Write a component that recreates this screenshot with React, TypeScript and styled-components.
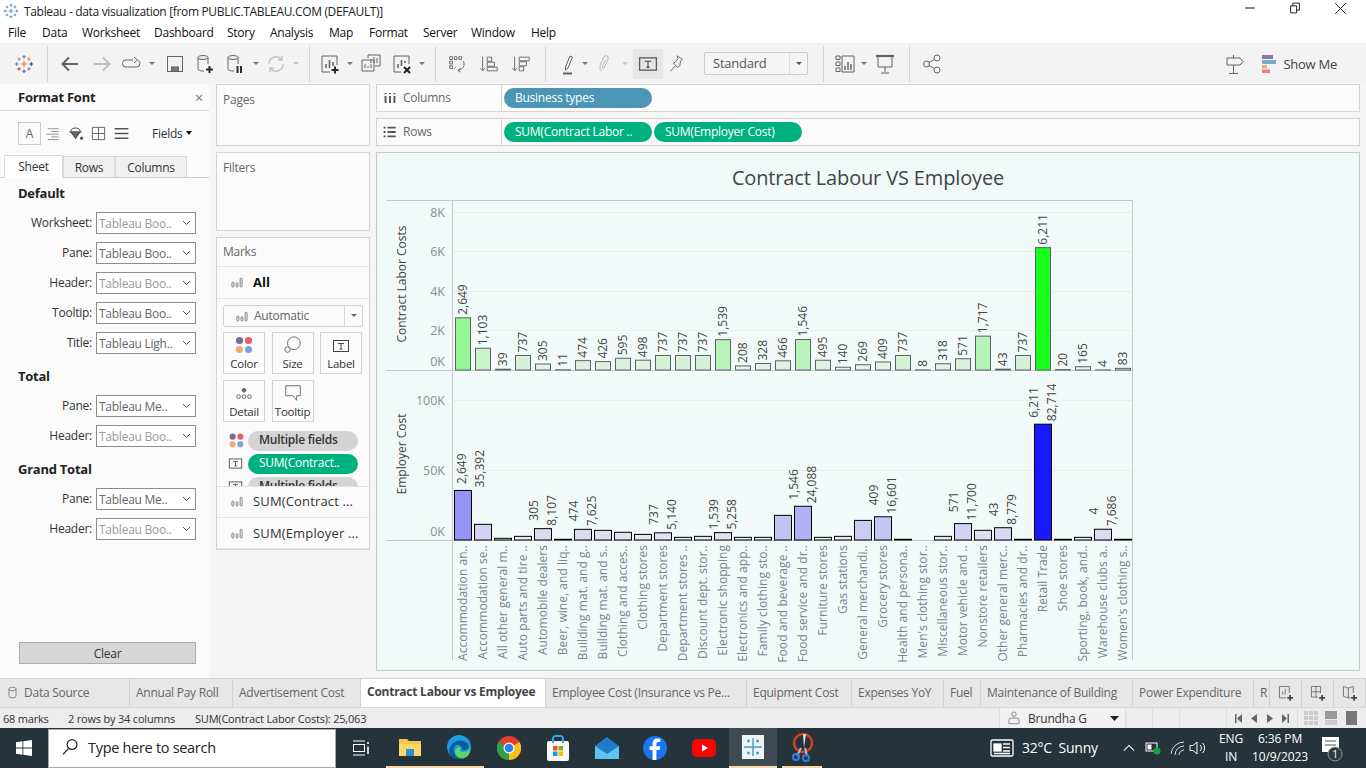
import React from "react";
import styled, { createGlobalStyle } from "styled-components";

const Global = createGlobalStyle`
  html, body { margin: 0; padding: 0; overflow: hidden; background: #f5f5f5; }
  * { box-sizing: border-box; }
`;
const UI = `"Open Sans", "Noto Sans", sans-serif`;

const Page = styled.div`
  width: 1366px; height: 768px; display: flex; flex-direction: column; overflow: hidden;
  font-family: ${UI}; font-size: 12px; color: #333; letter-spacing: -0.25px;
`;
const TitleBar = styled.div`
  height: 22px; background: #fff; display: flex; align-items: center; padding-left: 3px; gap: 5px;
  color: #222; position: relative; letter-spacing: -0.33px;
`;
const WinCtl = styled.div<{ $x: number }>`
  position: absolute; top: 2px; left: ${p => p.$x}px;
`;
const MenuBar = styled.div`
  height: 21px; background: #fff; display: flex; align-items: center; padding-left: 8px; color: #111;
`;
const MenuItem = styled.span<{ $w: number }>`
  width: ${p => p.$w}px; flex: none;
`;
const Toolbar = styled.div`
  height: 41px; background: #f3f3f3; display: flex; align-items: center;
`;
const Tool = styled.div<{ $w: number; $on?: boolean }>`
  width: ${p => p.$w}px; height: 30px; flex: none; display: flex; align-items: center; justify-content: center;
  background: ${p => (p.$on ? "#e6e6e6" : "transparent")};
`;
const Sep = styled.div`
  width: 1px; height: 36px; background: #d4d4d4; flex: none;
`;
const Gap = styled.div<{ $w: number }>`
  width: ${p => p.$w}px; flex: none;
`;
const Grow = styled.div`flex: 1;`;
const StdBox = styled.div`
  width: 104px; height: 23px; flex: none; border: 1px solid #ccc; border-radius: 2px; background: #f5f5f5; margin-bottom: 1px;
  display: flex; align-items: center; padding: 0 0 1px 8px; color: #555; font-size: 13px; position: relative;
`;
const StdArrow = styled.div`
  position: absolute; right: 0; top: 0; bottom: 0; width: 18px; border-left: 1px solid #ddd;
  display: flex; align-items: center; justify-content: center;
`;
const Caret = styled.div<{ $c?: string; $s?: number }>`
  width: 0; height: 0; border-left: ${p => p.$s || 3}px solid transparent; border-right: ${p => p.$s || 3}px solid transparent;
  border-top: ${p => (p.$s || 3) + 0.5}px solid ${p => p.$c || "#777"};
`;
const ShowMe = styled.div`
  display: flex; align-items: center; gap: 7px; margin-left: 13px; margin-right: 29px; color: #444; font-size: 13px;
`;

const Main = styled.div`
  height: 594px; display: flex; background: #f5f5f5;
`;
const LeftPanel = styled.div`
  width: 209px; background: #fbfbfb; flex: none; display: flex; flex-direction: column; position: relative;
`;
const PanelHead = styled.div`
  height: 27px; border-bottom: 1px solid #d8d8d8; display: flex; align-items: center; justify-content: space-between;
  padding: 0 6px 0 18px; font-weight: 700; font-size: 13px; color: #222;
`;
const Close = styled.span`
  font-weight: 400; font-size: 15px; color: #777;
`;
const IconRow = styled.div`
  height: 44px; display: flex; align-items: center; padding-left: 18px; color: #333;
`;
const ABox = styled.div`
  width: 23px; height: 23px; border: 1px solid #ccc; display: flex; align-items: center; justify-content: center;
  color: #666; font-size: 12px;
`;
const FmtIcon = styled.div`
  width: 23px; display: flex; justify-content: center;
`;
const Fields = styled.div`
  margin-left: 19px; display: flex; align-items: center; gap: 3px; color: #333;
`;
const Tabs = styled.div`
  height: 23px; display: flex; align-items: flex-end; padding-left: 4px; border-bottom: 1px solid #ccc;
`;
const FTab = styled.div<{ $w: number; $on?: boolean }>`
  width: ${p => p.$w}px; height: ${p => (p.$on ? 23 : 21)}px; flex: none; display: flex; align-items: center; justify-content: center;
  background: ${p => (p.$on ? "#fff" : "#f0f0f0")};
  border: 1px solid #d9d9d9; border-bottom: ${p => (p.$on ? "1px solid #fff" : "none")};
  margin-bottom: ${p => (p.$on ? -1 : 0)}px; color: #333;
`;
const Section = styled.div<{ $mt: number }>`
  margin-top: ${p => p.$mt}px; padding-left: 18px; font-weight: 700; font-size: 13px; color: #222; height: 18px; line-height: 18px;
`;
const FontRows = styled.div`
  display: flex; flex-direction: column; gap: 8px; margin-top: 10px;
`;
const FontRow = styled.div`
  display: flex; align-items: center; height: 22px;
`;
const FontLabel = styled.div`
  width: 92px; text-align: right; color: #333; flex: none; padding-bottom: 2px;
`;
const FontSelect = styled.div<{ $off?: boolean }>`
  margin-left: 4px; width: 100px; height: 22px; border: 1px solid #8d8d8d; background: #fff;
  display: flex; align-items: center; padding-left: 2px; justify-content: space-between; padding-right: 4px;
  color: ${p => (p.$off ? "#9a9a9a" : "#666")}; white-space: nowrap;
`;
const ClearBtn = styled.div`
  position: absolute; left: 19px; top: 558px; width: 177px; height: 22px; background: #d6d6d6; border: 1px solid #adadad;
  display: flex; align-items: center; justify-content: center; color: #333;
`;

const MidCol = styled.div`
  width: 154px; margin-left: 7px; flex: none; display: flex; flex-direction: column; gap: 6px;
`;
const Card = styled.div<{ $h: number }>`
  height: ${p => p.$h}px; background: #fbfbfb; border: 1px solid #d4d4d4; padding: 6px 6px; color: #666;
`;
const Marks = styled.div`
  height: 313px; background: #fbfbfb; border: 1px solid #d4d4d4; display: flex; flex-direction: column;
`;
const MarksHead = styled.div`
  height: 29px; padding: 5px 6px; color: #666; border-bottom: 1px solid #e2e2e2;
`;
const MarkRow = styled.div<{ $b?: boolean; $h: number }>`
  height: ${p => p.$h}px; display: flex; align-items: center; gap: 9px; padding: 0 0 1px 13px; border-bottom: 1px solid #e2e2e2;
  font-size: 13px; font-weight: ${p => (p.$b ? 700 : 400)}; color: ${p => (p.$b ? "#111" : "#333")}; letter-spacing: ${p => (p.$b ? 0 : 0.15)}px; white-space: nowrap;
`;
const MarkBody = styled.div`
  height: 188px; padding: 6px 6px 0; border-bottom: 1px solid #e2e2e2; overflow: hidden; position: relative; flex: none;
`;
const Auto = styled.div`
  height: 22px; border: 1px solid #d0d0d0; border-radius: 2px; display: flex; align-items: center; padding-left: 11px; gap: 5px;
  color: #666; position: relative; background: #fbfbfb;
`;
const AutoArrow = styled.div`
  position: absolute; right: 0; top: 0; bottom: 0; width: 18px; border-left: 1px solid #d8d8d8;
  display: flex; align-items: center; justify-content: center;
`;
const MarkGrid = styled.div`
  display: grid; grid-template-columns: 42px 42px 42px; column-gap: 6.5px; row-gap: 6px; margin-top: 5px;
`;
const MarkBtn = styled.div`
  height: 42px; border: 1px solid #d4d4d4; display: flex; flex-direction: column; align-items: center; justify-content: flex-end;
  padding-bottom: 2px; gap: 1px; color: #333; font-size: 11.5px;
`;
const PillRow = styled.div<{ $mt?: number }>`
  display: flex; align-items: center; height: 20px; margin-top: ${p => p.$mt ?? 3}px;
`;
const PillIcon = styled.div`
  width: 25px; display: flex; justify-content: flex-start; padding-left: 5px; flex: none;
`;
const Pill = styled.div<{ $c: string; $fg: string; $w: number; $semi?: boolean }>`
  width: ${p => p.$w}px; height: 20px; border-radius: 10px; background: ${p => p.$c}; color: ${p => p.$fg};
  display: flex; align-items: center; padding: 0 0 2px 11px; white-space: nowrap; flex: none; overflow: hidden;
  font-weight: ${p => (p.$semi ? 600 : 400)};
`;
const Scroll = styled.div`
  position: absolute; left: 132px; top: 222px; width: 13px; height: 24px; background: #ddd; border: 1px solid #c8c8c8;
  display: flex; flex-direction: column; align-items: center; justify-content: space-around;
`;

const RightCol = styled.div`
  width: 984px; margin-left: 6px; flex: none; display: flex; flex-direction: column; gap: 6px;
`;
const Shelf = styled.div`
  height: 28px; background: #fbfbfb; border: 1px solid #d4d4d4; display: flex; align-items: center;
`;
const ShelfLabel = styled.div`
  width: 125px; height: 100%; flex: none; border-right: 1px solid #d4d4d4; display: flex; align-items: center; gap: 6px;
  padding: 0 0 1px 6px; color: #666; margin-right: 2px;
`;
const ShelfPills = styled.div`
  display: flex; gap: 2px; color: #fff;
`;
const View = styled.div`
  height: 519px; background: #f2faf9; border: 1px solid #c6cccc; display: flex; flex-direction: column;
`;
const ChartTitle = styled.div`
  height: 42px; padding-top: 11px; width: 982px; text-align: center; font-size: 20px; line-height: 27px; font-weight: 500; color: #444;
  letter-spacing: -0.15px; flex: none;
`;
const ChartSvg = styled.svg`
  display: block; margin-left: 9px; flex: none;
`;

const TabBar = styled.div`
  height: 29px; background: #e7e7e7; border-top: 1px solid #d2d2d2; display: flex; align-items: stretch;
`;
const STab = styled.div<{ $w: number; $on?: boolean }>`
  width: ${p => p.$w}px; flex: none; display: flex; align-items: center; padding: 0 0 ${p => (p.$on ? 3 : 2)}px 6px; gap: 5px;
  border-right: 1px solid #d2d2d2; overflow: hidden; white-space: nowrap;
  background: ${p => (p.$on ? "#fff" : "transparent")}; color: ${p => (p.$on ? "#444" : "#666")}; font-weight: ${p => (p.$on ? 700 : 400)};
`;
const TabIcon = styled.div<{ $w: number }>`
  width: ${p => p.$w}px; flex: none; display: flex; align-items: center; justify-content: center; border-right: 1px solid #d2d2d2;
`;
const Status = styled.div`
  height: 21px; background: #ececec; border-top: 1px solid #d8d8d8; display: flex; align-items: center; color: #333; font-size: 11px; letter-spacing: -0.2px;
`;
const StatText = styled.span<{ $w: number }>`
  width: ${p => p.$w}px; flex: none; white-space: nowrap;
`;
const UserBox = styled.div`
  width: 127px; height: 100%; flex: none; display: flex; align-items: center; gap: 7px; padding-left: 7px; background: #f1f1f1;
  border-left: 1px solid #dcdcdc; border-right: 1px solid #dcdcdc; position: relative; color: #333; font-size: 12px;
`;
const StatCell = styled.div<{ $w: number }>`
  width: ${p => p.$w}px; height: 100%; flex: none; border-right: 1px solid #dcdcdc; display: flex; align-items: center; justify-content: space-around; padding: 0 3px;
`;
const Task = styled.div`
  height: 40px; background: #25333b; display: flex; align-items: center; color: #fff; position: relative;
`;
const StartBtn = styled.div`
  width: 48px; height: 40px; display: flex; align-items: center; justify-content: center; flex: none;
`;
const Search = styled.div`
  width: 288px; height: 39px; margin-top: 1px; background: #fff; border: 1px solid #aaa; display: flex; align-items: center; gap: 9px; padding: 0 0 3px 12px;
  color: #222; font-size: 14.5px; flex: none; letter-spacing: -0.3px;
`;
const TaskSlot = styled.div<{ $w: number; $on?: boolean; $open?: boolean }>`
  width: ${p => p.$w}px; height: 40px; flex: none; display: flex; align-items: center; justify-content: center; position: relative;
  background: ${p => (p.$on ? "#3e4b53" : "transparent")};
  border-bottom: ${p => (p.$open ? "2px solid #f6d7b0" : "none")};
`;
const Tray = styled.div<{ $w: number }>`
  width: ${p => p.$w}px; flex: none; display: flex; flex-direction: column; align-items: center; line-height: 18px; font-size: 12px; color: #fff; letter-spacing: -0.1px;
`;
const Weather = styled.div`
  display: flex; align-items: center; gap: 8px; font-size: 14px; width: 114px; flex: none; white-space: pre; padding: 0 0 1px 1px;
`;

const Ico: React.FC<{ s?: number; c?: string; w?: number; children: React.ReactNode }> = ({ s = 22, c = "#636363", w = 1, children }) => (
  <svg width={s} height={s} viewBox="0 0 22 22" fill="none" stroke={c} strokeWidth={w} style={{ display: "block", flex: "none" }}>
    {children}
  </svg>
);

const Plus: React.FC<{ x: number; y: number; c?: string; r?: number }> = ({ x, y, c = "#2b2b2b", r = 3.5 }) => (
  <path d={`M${x - r} ${y}H${x + r}M${x} ${y - r}V${y + r}`} stroke={c} strokeWidth={2} />
);

const TabLogo: React.FC<{ s?: number; mono?: boolean }> = ({ s = 22, mono }) => {
  const col = (c: string) => (mono ? "#5d8fb4" : c);
  const pts: [number, number, number, string][] = [
    [11, 11, 3.4, col("#e8762d")], [11, 3, 2, col("#5b879b")], [11, 19, 2, col("#5b6591")], [3, 11, 2, col("#59879b")], [19, 11, 2, col("#1f447e")],
    [5.5, 5.5, 1.7, col("#7099a6")], [16.5, 5.5, 1.7, col("#e8762d")], [5.5, 16.5, 1.7, col("#c72037")], [16.5, 16.5, 1.7, col("#59879b")],
  ];
  return (
    <svg width={s} height={s} viewBox="0 0 22 22" style={{ display: "block", flex: "none" }}>
      {pts.map(([x, y, r, c], i) => (
        <path key={i} d={`M${x - r} ${y}H${x + r}M${x} ${y - r}V${y + r}`} stroke={c} strokeWidth={1.3} fill="none" />
      ))}
    </svg>
  );
};

const BarsGlyph: React.FC = () => (
  <Ico s={14} c="#777" w={1.4}>
    <rect x="3" y="11" width="3" height="8" rx="1.5" />
    <rect x="9.5" y="12" width="3" height="7" rx="1.5" />
    <rect x="16" y="5" width="3" height="14" rx="1.5" />
  </Ico>
);
const Dots: React.FC<{ s?: number }> = ({ s = 20 }) => (
  <svg width={s} height={s} viewBox="0 0 20 20" style={{ display: "block" }}>
    <circle cx="5.5" cy="5.5" r="3.6" fill="#7b6a95" />
    <circle cx="14.5" cy="5.5" r="3.6" fill="#e4606d" />
    <circle cx="5.5" cy="14.5" r="3.6" fill="#f0a878" />
    <circle cx="14.5" cy="14.5" r="3.6" fill="#7fa3d1" />
  </svg>
);
const TBox: React.FC<{ s?: number }> = ({ s = 18 }) => (
  <svg width={s} height={s} viewBox="0 0 18 18" fill="none" stroke="#444" style={{ display: "block" }}>
    <rect x="1.5" y="3.5" width="15" height="11" />
    <path d="M6 6.5H12M9 6.5V12M7.6 12H10.4" />
  </svg>
);

type Row = { n: string; a: number; b: number; lab?: boolean };
const data: Row[] = [
  { n: "Accommodation an..", a: 2649, b: 35392, lab: true },
  { n: "Accommodation se..", a: 1103, b: 11200 },
  { n: "All other general m..", a: 39, b: 1200 },
  { n: "Auto parts and tire ..", a: 737, b: 2600 },
  { n: "Automobile dealers", a: 305, b: 8107, lab: true },
  { n: "Beer, wine, and liq..", a: 11, b: 500 },
  { n: "Building mat. and g..", a: 474, b: 7625, lab: true },
  { n: "Building mat. and s..", a: 426, b: 6900 },
  { n: "Clothing and acces..", a: 595, b: 5500 },
  { n: "Clothing stores", a: 498, b: 4000 },
  { n: "Department stores", a: 737, b: 5140, lab: true },
  { n: "Department stores ..", a: 737, b: 1900 },
  { n: "Discount dept. stor..", a: 737, b: 2600 },
  { n: "Electronic shopping", a: 1539, b: 5258, lab: true },
  { n: "Electronics and app..", a: 208, b: 1900 },
  { n: "Family clothing sto..", a: 328, b: 1900 },
  { n: "Food and beverage ..", a: 466, b: 17600 },
  { n: "Food service and dr..", a: 1546, b: 24088, lab: true },
  { n: "Furniture stores", a: 495, b: 1900 },
  { n: "Gas stations", a: 140, b: 2600 },
  { n: "General merchandi..", a: 269, b: 14000 },
  { n: "Grocery stores", a: 409, b: 16601, lab: true },
  { n: "Health and persona..", a: 737, b: 500 },
  { n: "Men's clothing stor..", a: 8, b: 0 },
  { n: "Miscellaneous stor..", a: 318, b: 2600 },
  { n: "Motor vehicle and ..", a: 571, b: 11700, lab: true },
  { n: "Nonstore retailers", a: 1717, b: 6900 },
  { n: "Other general merc..", a: 43, b: 8779, lab: true },
  { n: "Pharmacies and dr..", a: 737, b: 500 },
  { n: "Retail Trade", a: 6211, b: 82714, lab: true },
  { n: "Shoe stores", a: 20, b: 500 },
  { n: "Sporting, book, and..", a: 165, b: 1900 },
  { n: "Warehouse clubs a..", a: 4, b: 7686, lab: true },
  { n: "Women's clothing s..", a: 83, b: 500 },
];

const fmt = (v: number) => v.toLocaleString("en-US");
const mix = (t: number, to: [number, number, number]) => {
  const from = [240, 240, 240];
  return `rgb(${from.map((f, i) => Math.round(f + (to[i] - f) * t)).join(",")})`;
};
const CF = `"Open Sans", sans-serif`;

const Chart: React.FC = () => {
  const labelAt = (x: number, y: number, txt: string, anchor: "start" | "middle" | "end", fill: string, ls = 0) => (
    <text transform={`rotate(-90 ${x} ${y})`} x={x} y={y} textAnchor={anchor} fill={fill} fontFamily={CF} fontSize={12} letterSpacing={ls}>{txt}</text>
  );
  return (
    <ChartSvg width={760} height={470} viewBox="386 195 760 470">
      {[212.5, 251.5, 291.5, 330.5, 400.5, 470.5].map(y => (
        <line key={y} x1={453} x2={1132} y1={y} y2={y} stroke="#ececec" />
      ))}
      <path d="M386 200.5H1132.5V660M386 370.5H1132M386 540.5H1132M452.5 200V660" stroke="#c4c8ca" fill="none" />
      {[["8K", 217], ["6K", 256], ["4K", 296], ["2K", 335], ["0K", 366], ["100K", 405], ["50K", 475], ["0K", 536]].map(([t, y]) => (
        <text key={`${t}${y}`} x={445} y={y as number} textAnchor="end" fill="#8a8f93" fontFamily={CF} fontSize={12.5} letterSpacing={0}>{t}</text>
      ))}
      <text transform="rotate(-90 405.5 284)" x={405.5} y={284} textAnchor="middle" fill="#444" fontFamily={CF} fontSize={12} letterSpacing={0}>Contract Labor Costs</text>
      <text transform="rotate(-90 405.5 454)" x={405.5} y={454} textAnchor="middle" fill="#444" fontFamily={CF} fontSize={12} letterSpacing={0}>Employer Cost</text>
      {data.map((d, i) => {
        const cx = 463 + i * 20;
        const hA = d.a * 0.0197;
        const topA = 370 - hA;
        const hB = d.b * 0.0014;
        const topB = 540 - hB;
        const long = fmt(d.b);
        const lw = long.replace(",", "").length * 6.9 + 3;
        const mid = topB - 3 - lw / 2;
        const shift = i === 0 ? 8 : 0;
        return (
          <g key={d.n}>
            <rect x={cx - 7.5} y={topA} width={15} height={hA} fill={mix(d.a / 6211, [25, 255, 25])} stroke="#5a626c" strokeWidth={1} />
            {labelAt(cx + 4.5, topA - 3, fmt(d.a), "start", "#444")}
            {d.b > 0 && <rect x={cx - 8.5} y={topB} width={17} height={hB} fill={mix(d.b / 82714, [25, 25, 255])} stroke="#000" strokeWidth={1} />}
            {d.lab && labelAt(cx - 5 + shift, mid, fmt(d.a), "middle", "#444")}
            {d.lab && labelAt(cx + 13 + shift, mid, long, "middle", "#444")}
            {labelAt(cx + 4, 545, d.n, "end", "#7c8388", 0.05)}
          </g>
        );
      })}
    </ChartSvg>
  );
};

const fontRows1: [string, boolean, string][] = [
  ["Worksheet:", true, "Tableau Boo.."], ["Pane:", false, "Tableau Boo.."], ["Header:", true, "Tableau Boo.."], ["Tooltip:", false, "Tableau Boo.."], ["Title:", false, "Tableau Ligh.."],
];
const fontRows2: [string, boolean, string][] = [["Pane:", false, "Tableau Me.."], ["Header:", true, "Tableau Boo.."]];
const Chev = () => (
  <svg width="9" height="6" viewBox="0 0 9 6" fill="none" stroke="#555"><path d="M1 1L4.5 4.5L8 1" /></svg>
);
const FontGroup: React.FC<{ rows: [string, boolean, string][] }> = ({ rows }) => (
  <FontRows>
    {rows.map(([l, off, v]) => (
      <FontRow key={l}>
        <FontLabel>{l}</FontLabel>
        <FontSelect $off={off}>{v}<Chev /></FontSelect>
      </FontRow>
    ))}
  </FontRows>
);

const menu: [string, number][] = [["File", 34], ["Data", 40], ["Worksheet", 72], ["Dashboard", 73], ["Story", 43], ["Analysis", 59], ["Map", 40], ["Format", 54], ["Server", 48], ["Window", 60], ["Help", 40]];
const sheets: [string, number][] = [["Annual Pay Roll", 103], ["Advertisement Cost", 128]];
const sheets2: [string, number][] = [["Employee Cost (Insurance vs Pe...", 201], ["Equipment Cost", 105], ["Expenses YoY", 92], ["Fuel", 37], ["Maintenance of Building", 152], ["Power Expenditure", 121], ["R", 16]];

export default function App() {
  return (
    <Page>
      <Global />
      <TitleBar>
        <TabLogo s={16} mono />
        <span>Tableau - data visualization [from PUBLIC.TABLEAU.COM (DEFAULT)]</span>
        <WinCtl $x={1244}><Ico s={12} c="#222"><path d="M2 11H20" strokeWidth="2" /></Ico></WinCtl>
        <WinCtl $x={1289}><Ico s={12} c="#222" w={1.8}><path d="M3 7H14V20H3ZM7 7V2H19V15H14" /></Ico></WinCtl>
        <WinCtl $x={1334}><Ico s={13} c="#222" w={1.6}><path d="M2 2L20 20M20 2L2 20" /></Ico></WinCtl>
      </TitleBar>
      <MenuBar>
        {menu.map(([m, w]) => <MenuItem key={m} $w={w}>{m}</MenuItem>)}
      </MenuBar>
      <Toolbar>
        <Tool $w={47}><TabLogo s={20} /></Tool>
        <Sep />
        <Gap $w={6} />
        <Tool $w={32}><Ico><path d="M19 11H4M10 4.5L3.5 11L10 17.5" strokeWidth="2" /></Ico></Tool>
        <Tool $w={32}><Ico c="#bdbdbd"><path d="M3 11H18M12 4.5L18.5 11L12 17.5" strokeWidth="2" /></Ico></Tool>
        <Tool $w={26}><Ico><path d="M13 7H6A3.5 3.5 0 0 0 6 14H16.5A3.5 3.5 0 0 0 20 10.5A3.5 3.5 0 0 0 18 7.4M14 4L17.5 7L14 10" /></Ico></Tool>
        <Tool $w={16}><Caret /></Tool>
        <Tool $w={29}><Ico><rect x="3.5" y="3.5" width="15" height="15" /><rect x="7.5" y="14" width="7" height="4.5" fill="#777" /></Ico></Tool>
        <Tool $w={32}><Ico><ellipse cx="9" cy="4.5" rx="5" ry="2" /><path d="M4 4.5V16A5 2 0 0 0 10 18M14 4.5V11" /><Plus x={15.5} y={16.5} /></Ico></Tool>
        <Tool $w={28}><Ico><ellipse cx="9" cy="4.5" rx="5" ry="2" /><path d="M4 4.5V16A5 2 0 0 0 10 18M14 4.5V11" /><path d="M13.5 13V20M17 13V20" strokeWidth="2" stroke="#2b2b2b" /></Ico></Tool>
        <Tool $w={14}><Caret /></Tool>
        <Tool $w={25}><Ico c="#c4c4c4" w={1.5}><path d="M4 11A7 7 0 0 1 16.5 6.5M18 11A7 7 0 0 1 5.5 15.5M17 3V7H13M5 19V15H9" /></Ico></Tool>
        <Tool $w={15}><Caret $c="#c4c4c4" /></Tool>
        <Gap $w={6} />
        <Sep />
        <Gap $w={5} />
        <Tool $w={30}><Ico><path d="M18 12V3H3V19H11" /><path d="M7 15V11M10.5 15V7M14 13V9" strokeWidth="1.6" /><Plus x={16} y={17} /></Ico></Tool>
        <Tool $w={10}><Caret /></Tool>
        <Tool $w={32}><Ico><path d="M8 5V2H20V13H15M2 7H14V18H2Z" /><path d="M11 10V6M14 10V4M17 10V5M5 15V11M8 15V13M11 15V11" /></Ico></Tool>
        <Tool $w={30}><Ico><path d="M18 11V3H3V19H10" /><path d="M7 15V11M10.5 13V7M14 10V8" strokeWidth="1.6" /><path d="M13 14L19 20M19 14L13 20" stroke="#222" strokeWidth="2" /></Ico></Tool>
        <Tool $w={10}><Caret /></Tool>
        <Gap $w={8} />
        <Sep />
        <Gap $w={5} />
        <Tool $w={32}><Ico s={20} w={1}><path d="M3 3H6V6H3ZM8 3H11V6H8ZM13 3H16V6H13ZM3 8H6V11H3ZM3 13H6V16H3Z" /><path d="M18 8C20 12 18 17 12 18M12 18L15 15.5M12 18L15 20M8 16L10 14" /></Ico></Tool>
        <Tool $w={32}><Ico s={20}><path d="M4 3V18M1.5 15.5L4 18.5L6.5 15.5" /><path d="M9 3.5H14V8H9ZM9 9H17V13.5H9ZM9 14.5H20V18.5H9Z" /></Ico></Tool>
        <Tool $w={32}><Ico s={20}><path d="M4 3V18M1.5 15.5L4 18.5L6.5 15.5" /><path d="M9 3.5H20V7.5H9ZM9 8.5H17V13H9ZM9 14H14V18.5H9Z" /></Ico></Tool>
        <Gap $w={8} />
        <Sep />
        <Gap $w={8} />
        <Tool $w={28}><Ico><path d="M8.5 14L13 3L15.5 4L11 15L8.5 17Z" /><path d="M6 20.5H15" strokeWidth="2" /></Ico></Tool>
        <Tool $w={6}><Caret /></Tool>
        <Tool $w={34}><Ico c="#c4c4c4" w={1.2}><path d="M8 18C5 17 6 13 7 10L10 4C11.5 1.5 15 3 14 6L10.5 14C9.5 16 7.5 15 8.5 13L11.5 7" /></Ico></Tool>
        <Tool $w={6}><Caret $c="#c4c4c4" /></Tool>
        <Gap $w={5} />
        <Tool $w={30} $on><TBox s={20} /></Tool>
        <Tool $w={28}><Ico s={20}><path d="M11 2L17 6L15 7.5L14 13L12 15L7 10L9 9L12 5ZM9 13L4 19" /></Ico></Tool>
        <Gap $w={13} />
        <StdBox>Standard<StdArrow><Caret $c="#555" /></StdArrow></StdBox>
        <Gap $w={15} />
        <Sep />
        <Gap $w={5} />
        <Tool $w={32}><Ico><path d="M2 3H6V6.5H2ZM2 9H6V12.5H2ZM2 15H6V18.5H2ZM8 3H20V19H8Z" /><path d="M11 17V13M14 17V9M17 17V11" strokeWidth="1.4" /></Ico></Tool>
        <Tool $w={6}><Caret /></Tool>
        <Tool $w={36}><Ico><path d="M4 3V14H18V3M11 14V19M7 20H15" /><path d="M2 3H20" strokeWidth="2.2" /></Ico></Tool>
        <Gap $w={6} />
        <Sep />
        <Tool $w={44}><Ico><circle cx="5.5" cy="11" r="3" /><circle cx="16" cy="5" r="3" /><circle cx="16" cy="17" r="3" /><path d="M8 9.5L13.5 6.5M8 12.5L13.5 15.5" /></Ico></Tool>
        <Grow />
        <Tool $w={30}><Ico><path d="M4 5H17L20 8.5L17 12H4ZM10.5 2V5M10.5 12V20M6 20.5H15" /></Ico></Tool>
        <ShowMe>
          <svg width="14" height="18" viewBox="0 0 14 18" style={{ display: "block" }}>
            <rect x="0" y="0" width="11" height="4" fill="#8b78a6" /><rect x="0" y="5" width="14" height="4" fill="#7fa8cf" />
            <rect x="0" y="10" width="5" height="3.5" fill="#f0a878" /><rect x="0" y="14.5" width="8" height="3.5" fill="#ee7a85" />
          </svg>
          Show Me
        </ShowMe>
      </Toolbar>
      <Main>
        <LeftPanel>
          <PanelHead>Format Font<Close>×</Close></PanelHead>
          <IconRow>
            <ABox>A</ABox>
            <FmtIcon><Ico s={15}><path d="M4 4H20M9 8H20M2 12H20M9 16H20M4 20H20" /></Ico></FmtIcon>
            <FmtIcon><Ico s={17} c="#555" w={1.3}><path d="M5 8A6 4 0 0 1 17 8L11 17ZM3 9H19" /><path d="M5 9H17L11 17Z" fill="#666" /><circle cx="19" cy="17" r="1.5" fill="#444" /></Ico></FmtIcon>
            <FmtIcon><Ico s={15} w={1.4}><path d="M2 2H20V20H2ZM11 2V20M2 11H20" /></Ico></FmtIcon>
            <FmtIcon><Ico s={15} c="#555"><path d="M1 4H21M1 11H21M1 18H21" strokeWidth="2.4" /></Ico></FmtIcon>
            <Fields>Fields<Caret $c="#111" $s={3.5} /></Fields>
          </IconRow>
          <Tabs>
            <FTab $w={59} $on>Sheet</FTab>
            <FTab $w={52}>Rows</FTab>
            <FTab $w={72}>Columns</FTab>
          </Tabs>
          <Section $mt={6}>Default</Section>
          <FontGroup rows={fontRows1} />
          <Section $mt={13}>Total</Section>
          <FontGroup rows={fontRows2} />
          <Section $mt={13}>Grand Total</Section>
          <FontGroup rows={fontRows2} />
          <ClearBtn>Clear</ClearBtn>
        </LeftPanel>
        <MidCol>
          <Card $h={62}>Pages</Card>
          <Card $h={79}>Filters</Card>
          <Marks>
            <MarksHead>Marks</MarksHead>
            <MarkRow $b $h={32}><BarsGlyph />All</MarkRow>
            <MarkBody>
              <Auto><BarsGlyph />Automatic<AutoArrow><Caret $c="#666" /></AutoArrow></Auto>
              <MarkGrid>
                <MarkBtn><Dots />Color</MarkBtn>
                <MarkBtn><Ico s={20}><circle cx="12" cy="9" r="7" /><circle cx="5" cy="16" r="3" fill="#fbfbfb" /></Ico>Size</MarkBtn>
                <MarkBtn><TBox />Label</MarkBtn>
                <MarkBtn><Ico s={20}><circle cx="11" cy="8" r="2" fill="#666" /><circle cx="5" cy="15" r="2" /><circle cx="11" cy="15" r="2" /><circle cx="17" cy="15" r="2" /></Ico>Detail</MarkBtn>
                <MarkBtn><Ico s={20}><path d="M3 3H19V14H15V19L11 14H3Z" /></Ico>Tooltip</MarkBtn>
              </MarkGrid>
              <PillRow $mt={9}><PillIcon><Dots s={17} /></PillIcon><Pill $c="#d4d4d4" $fg="#333" $w={110} $semi>Multiple fields</Pill></PillRow>
              <PillRow><PillIcon><TBox s={15} /></PillIcon><Pill $c="#00b180" $fg="#fff" $w={110}>SUM(Contract..</Pill></PillRow>
              <PillRow><PillIcon><TBox s={15} /></PillIcon><Pill $c="#d4d4d4" $fg="#333" $w={110} $semi>Multiple fields</Pill></PillRow>
              <Scroll><svg width="9" height="6"><path d="M0 6L4.5 0L9 6Z" fill="#999" /></svg><svg width="9" height="6"><path d="M0 0L4.5 6L9 0Z" fill="#556" /></svg></Scroll>
            </MarkBody>
            <MarkRow $h={32}><BarsGlyph />SUM(Contract ...</MarkRow>
            <MarkRow $h={31}><BarsGlyph />SUM(Employer ...</MarkRow>
          </Marks>
        </MidCol>
        <RightCol>
          <Shelf>
            <ShelfLabel><Ico s={14} c="#555"><path d="M4 8V19M11 8V19M18 8V19M4 3V5M11 3V5M18 3V5" strokeWidth="3" /></Ico>Columns</ShelfLabel>
            <ShelfPills><Pill $c="#4b96b4" $fg="#fff" $w={148}>Business types</Pill></ShelfPills>
          </Shelf>
          <Shelf>
            <ShelfLabel><Ico s={14} c="#555"><path d="M7 4H20M7 11H20M7 18H20M1 4H4M1 11H4M1 18H4" strokeWidth="2.8" /></Ico>Rows</ShelfLabel>
            <ShelfPills>
              <Pill $c="#00b180" $fg="#fff" $w={148}>SUM(Contract Labor ..</Pill>
              <Pill $c="#00b180" $fg="#fff" $w={148}>SUM(Employer Cost)</Pill>
            </ShelfPills>
          </Shelf>
          <View>
            <ChartTitle>Contract Labour VS Employee</ChartTitle>
            <Chart />
          </View>
        </RightCol>
      </Main>
      <TabBar>
        <STab $w={130}><Ico s={13} c="#777" w={1.4}><ellipse cx="11" cy="5" rx="6" ry="3" /><path d="M5 5V17A6 3 0 0 0 17 17V5" /></Ico>Data Source</STab>
        {sheets.map(([s, w]) => <STab key={s} $w={w}>{s}</STab>)}
        <STab $w={185} $on>Contract Labour vs Employee</STab>
        {sheets2.map(([s, w]) => <STab key={s} $w={w}>{s}</STab>)}
        <TabIcon $w={32}><Ico s={18}><path d="M15 11V3H3V17H11M7 13V9M10 13V6" /><Plus x={16} y={17} c="#444" /></Ico></TabIcon>
        <TabIcon $w={32}><Ico s={18}><path d="M14 11V3H3V16H11M3 9.5H14M8.5 3V16" /><Plus x={16} y={17} c="#444" /></Ico></TabIcon>
        <TabIcon $w={32}><Ico s={18}><path d="M3 3L9 5V17L3 15ZM9 5L15 3V11M9 17H12" /><Plus x={16} y={17} c="#444" /></Ico></TabIcon>
      </TabBar>
      <Status>
        <Gap $w={3} />
        <StatText $w={65}>68 marks</StatText>
        <StatText $w={127}>2 rows by 34 columns</StatText>
        <StatText $w={804}>SUM(Contract Labor Costs): 25,063</StatText>
        <UserBox>
          <Ico s={14} c="#555"><circle cx="11" cy="5" r="3.5" /><path d="M3 20V15A4 4 0 0 1 7 11H15A4 4 0 0 1 19 15V20Z" /></Ico>
          Brundha G
          <svg width="9" height="5" style={{ position: "absolute", right: 6, top: 8 }}><path d="M0 0H9L4.5 5Z" fill="#222" /></svg>
        </UserBox>
        <StatCell $w={27} />
        <StatCell $w={27} />
        <StatCell $w={47} />
        <StatCell $w={71}>
          <svg width="7" height="9" fill="#666"><path d="M0 0H1.5V9H0ZM7 0V9L2 4.5Z" /></svg>
          <svg width="6" height="9" fill="#666"><path d="M6 0V9L0 4.5Z" /></svg>
          <svg width="6" height="9" fill="#666"><path d="M0 0V9L6 4.5Z" /></svg>
          <svg width="7" height="9" fill="#666"><path d="M5.5 0H7V9H5.5ZM0 0V9L5 4.5Z" /></svg>
        </StatCell>
        <Gap $w={4} />
        <svg width="60" height="16" viewBox="0 0 60 16" style={{ display: "block" }}>
          <g fill="#ccc">{[2, 7, 12].map(x => [1, 6, 11].map(y => <rect key={`${x}${y}`} x={x} y={y} width="4" height="4" />))}</g>
          <rect x="23" y="1" width="12" height="8" fill="#999" /><rect x="23" y="10" width="12" height="5" fill="#ccc" />
          <rect x="44" y="1" width="11" height="14" fill="#777" />
        </svg>
      </Status>
      <Task>
        <StartBtn><svg width="16" height="16" viewBox="0 0 16 16" fill="#fff"><path d="M0 2.2L6.5 1.3V7.6H0ZM7.3 1.2L16 0V7.6H7.3ZM0 8.4H6.5V14.7L0 13.8ZM7.3 8.4H16V16L7.3 14.8Z" /></svg></StartBtn>
        <Search>
          <Ico s={18} c="#222" w={1.5}><circle cx="13.5" cy="8" r="6" /><path d="M9 13L2.5 20" /></Ico>
          Type here to search
        </Search>
        <TaskSlot $w={50}><svg width="18" height="16" viewBox="0 0 18 16" fill="none" stroke="#fff"><path d="M1 1H13M1 15H13" /><rect x="1.5" y="4.5" width="11" height="7" /><path d="M16 2V4M16 6.5V14" strokeWidth="1.5" /></svg></TaskSlot>
        <TaskSlot $w={48} $open><svg width="22" height="20" viewBox="0 0 22 20"><path d="M0 2H8L10 4H22V19H0Z" fill="#f5c74e" /><path d="M0 7H22V19H0Z" fill="#fcd768" /><rect x="7" y="12" width="8" height="7" fill="#2e8bd8" /></svg></TaskSlot>
        <TaskSlot $w={50} $open><svg width="24" height="24" viewBox="0 0 24 24"><circle cx="12" cy="12" r="12" fill="#1b9de2" /><path d="M2 15C4 6 14 3 20 8C23 11 22 15 17 15C13 15 15 11 12 10C8 9 5 14 8 19C10 22 14 24 18 22C9 27 2 22 2 15Z" fill="#0c5a9e" /><path d="M23 13C24 18 21 22 17 23C12 24 8 21 8 17C8 13 13 11 15 13C12 14 12 17 16 17C19 17 22 16 23 13Z" fill="#5fd36a" /></svg></TaskSlot>
        <TaskSlot $w={49}><svg width="24" height="24" viewBox="0 0 24 24"><circle cx="12" cy="12" r="12" fill="#e33b2e" /><path d="M12 12L22.5 6A12 12 0 0 1 12 24Z" fill="#fbc116" /><path d="M12 12L12 24A12 12 0 0 1 1.5 6Z" fill="#2ca24c" /><circle cx="12" cy="12" r="5.5" fill="#fff" /><circle cx="12" cy="12" r="4.3" fill="#2f7fe8" /></svg></TaskSlot>
        <TaskSlot $w={49}><svg width="22" height="26" viewBox="0 0 22 26"><rect x="0" y="6" width="22" height="20" rx="2" fill="#f7f7f7" /><path d="M6 8V3A3 3 0 0 1 9 1H13A3 3 0 0 1 16 3V8" stroke="#35a6e8" strokeWidth="2" fill="none" /><rect x="6" y="11" width="4.5" height="4.5" fill="#f25022" /><rect x="11.5" y="11" width="4.5" height="4.5" fill="#7fba00" /><rect x="6" y="16.5" width="4.5" height="4.5" fill="#00a4ef" /><rect x="11.5" y="16.5" width="4.5" height="4.5" fill="#ffb900" /></svg></TaskSlot>
        <TaskSlot $w={49}><svg width="24" height="24" viewBox="0 0 24 24"><path d="M12 1L24 10V23H0V10Z" fill="#1f7bc9" /><path d="M0 10L12 18L24 10V23H0Z" fill="#5cc3f2" /></svg></TaskSlot>
        <TaskSlot $w={48}><svg width="24" height="24" viewBox="0 0 24 24"><circle cx="12" cy="12" r="12" fill="#1877f2" /><path d="M13.4 24V14H16.6L17.2 10.3H13.4V8C13.4 6.9 13.9 6 15.5 6H17.3V2.8C16.5 2.6 15.4 2.5 14.5 2.5C11.5 2.5 9.6 4.4 9.6 7.5V10.3H6.6V14H9.6V24Z" fill="#fff" /></svg></TaskSlot>
        <TaskSlot $w={50}><svg width="24" height="24" viewBox="0 0 24 24"><rect x="0" y="3" width="24" height="18" rx="5" fill="#f00" /><path d="M10 8.5V15.5L16 12Z" fill="#fff" /></svg></TaskSlot>
        <TaskSlot $w={48} $on $open><svg width="22" height="24" viewBox="0 0 22 24" style={{ background: "#eef3f6" }}>
          <path d="M11 3V21M2 12H20M5 6H8M14 6H17M5 18H8M14 18H17M6.5 4.5V7.5M15.5 4.5V7.5M6.5 16.5V19.5M15.5 16.5V19.5M8 12H14" stroke="#4d97c7" strokeWidth="1.4" />
        </svg></TaskSlot>
        <Gap $w={5} />
        <TaskSlot $w={40} $open><svg width="22" height="30" viewBox="0 0 22 30" fill="none"><circle cx="12" cy="11" r="9" stroke="#d3411e" strokeWidth="2.5" /><path d="M12 2L13 16L15 2Z" fill="#ddd" /><path d="M10 16L6 24M14 16L16 24" stroke="#bbb" strokeWidth="2" /><circle cx="5" cy="25" r="3" stroke="#2f7fe8" strokeWidth="2" /><circle cx="15" cy="26" r="3" stroke="#2f7fe8" strokeWidth="2" /></svg></TaskSlot>
        <Gap $w={167} />
        <Weather>
          <svg width="24" height="18" viewBox="0 0 24 18" fill="none" stroke="#fff" strokeWidth="1.3"><rect x="1" y="1" width="22" height="16" rx="1.5" /><rect x="4" y="5" width="7" height="7" fill="#fff" /><path d="M13 5H20M13 8.5H20M13 12H20M4 14.5H20" /></svg>
          <span>32°C  Sunny</span>
        </Weather>
        <Gap $w={19} />
        <Ico s={14} c="#fff" w={1.6}><path d="M3 15L11 7L19 15" /></Ico>
        <Gap $w={9} />
        <svg width="16" height="14" viewBox="0 0 16 14" fill="none" stroke="#fff"><rect x="1" y="2" width="11" height="8" /><rect x="3" y="4" width="3" height="4" fill="#fff" /><circle cx="12" cy="10" r="3.5" fill="#18a34a" stroke="none" /></svg>
        <Gap $w={9} />
        <svg width="16" height="15" viewBox="0 0 16 15" fill="none" stroke="#ddd"><path d="M1 13A13 13 0 0 1 14 1M5 14A9 9 0 0 1 14 5M9 14A5 5 0 0 1 14 9" /></svg>
        <Gap $w={3} />
        <svg width="17" height="16" viewBox="0 0 17 16" fill="none" stroke="#fff"><path d="M1 5.5H4L8 2V14L4 10.5H1ZM11 5A4 4 0 0 1 11 11M13.5 3A7 7 0 0 1 13.5 13" /></svg>
        <Gap $w={7} />
        <Tray $w={36}><span>ENG</span><span>IN</span></Tray>
        <Tray $w={62}><span>6:36 PM</span><span>10/9/2023</span></Tray>
        <Gap $w={8} />
        <svg width="26" height="28" viewBox="0 0 26 28" fill="none"><path d="M3 3H20V18H14L10 21V18H3Z" fill="#fff" /><path d="M6 7H17M6 11H17" stroke="#555" /><circle cx="16" cy="20" r="7" fill="#2d3a42" stroke="#999" /><text x="16" y="24" textAnchor="middle" fontSize="11" fill="#fff" fontFamily={CF}>1</text></svg>
      </Task>
    </Page>
  );
}
